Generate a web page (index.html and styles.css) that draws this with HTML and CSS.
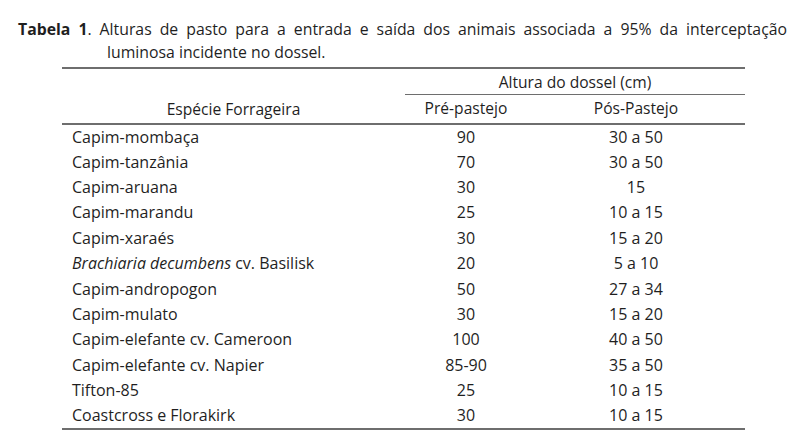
FILE: index.html
```html
<!DOCTYPE html>
<html lang="pt">
<head>
<meta charset="utf-8">
<title>Tabela 1</title>
<link rel="stylesheet" href="styles.css">
</head>
<body>
<div class="page">
  <p class="caption">
    <span class="line1"><b>Tabela 1</b>. Alturas de pasto para a entrada e saída dos animais associada a 95% da interceptação</span>
    <span class="line2">luminosa incidente no dossel.</span>
  </p>
  <table class="data">
    <colgroup>
      <col class="c-species">
      <col class="c-pre">
      <col class="c-pos">
    </colgroup>
    <thead>
      <tr class="h1">
        <th rowspan="2" class="species-h">Espécie Forrageira</th>
        <th colspan="2" class="group-h">Altura do dossel (cm)</th>
      </tr>
      <tr class="h2">
        <th>Pré-pastejo</th>
        <th>Pós-Pastejo</th>
      </tr>
    </thead>
    <tbody>
      <tr><td>Capim-mombaça</td><td>90</td><td>30 a 50</td></tr>
      <tr><td>Capim-tanzânia</td><td>70</td><td>30 a 50</td></tr>
      <tr><td>Capim-aruana</td><td>30</td><td>15</td></tr>
      <tr><td>Capim-marandu</td><td>25</td><td>10 a 15</td></tr>
      <tr><td>Capim-xaraés</td><td>30</td><td>15 a 20</td></tr>
      <tr><td><i>Brachiaria decumbens</i> cv. Basilisk</td><td>20</td><td>5 a 10</td></tr>
      <tr><td>Capim-andropogon</td><td>50</td><td>27 a 34</td></tr>
      <tr><td>Capim-mulato</td><td>30</td><td>15 a 20</td></tr>
      <tr><td>Capim-elefante cv. Cameroon</td><td>100</td><td>40 a 50</td></tr>
      <tr><td>Capim-elefante cv. Napier</td><td>85-90</td><td>35 a 50</td></tr>
      <tr><td>Tifton-85</td><td>25</td><td>10 a 15</td></tr>
      <tr><td>Coastcross e Florakirk</td><td>30</td><td>10 a 15</td></tr>
    </tbody>
  </table>
</div>
</body>
</html>
```

FILE: styles.css
```css
html, body {
  margin: 0;
  background: #ffffff;
}

body {
  font-family: "Open Sans", "Liberation Sans", sans-serif;
  color: #1f1f1f;
  font-size: 16px;
}

.page {
  width: 804px;
  height: 446px;
  overflow: hidden;
}

.caption {
  margin: 0;
  padding: 18px 17px 0 18px;
  line-height: 23px;
  font-size: 15.8px;
}

.caption b {
  font-weight: 700;
}

.line1 {
  display: block;
  text-align: justify;
  text-align-last: justify;
}

.line2 {
  display: block;
  padding-left: 89px;
}

.data {
  margin: 3px 0 0 62px;
  width: 683px;
  border-collapse: collapse;
  table-layout: fixed;
  border-top: 2px solid #6e6e6e;
  border-bottom: 2px solid #6e6e6e;
}

.c-species { width: 343px; }
.c-pre { width: 122px; }
.c-pos { width: 218px; }

.data th {
  font-weight: 400;
  padding: 0;
  line-height: 22px;
  font-size: 15.6px;
}

.data .h1 th {
  height: 25px;
}

.data .group-h {
  border-bottom: 1.5px solid #6e6e6e;
  vertical-align: middle;
}

.data .h2 th {
  height: 26px;
  vertical-align: middle;
  padding-bottom: 2px;
  border-bottom: 2px solid #6e6e6e;
}

.data .species-h {
  vertical-align: bottom;
  padding-bottom: 3px;
  border-bottom: 2px solid #6e6e6e;
}

.data td {
  height: 25.4px;
  padding: 0 0 1px;
  line-height: 22px;
  text-align: center;
  vertical-align: middle;
  box-sizing: border-box;
}

.data td:first-child {
  text-align: left;
  padding-left: 10px;
}
```
